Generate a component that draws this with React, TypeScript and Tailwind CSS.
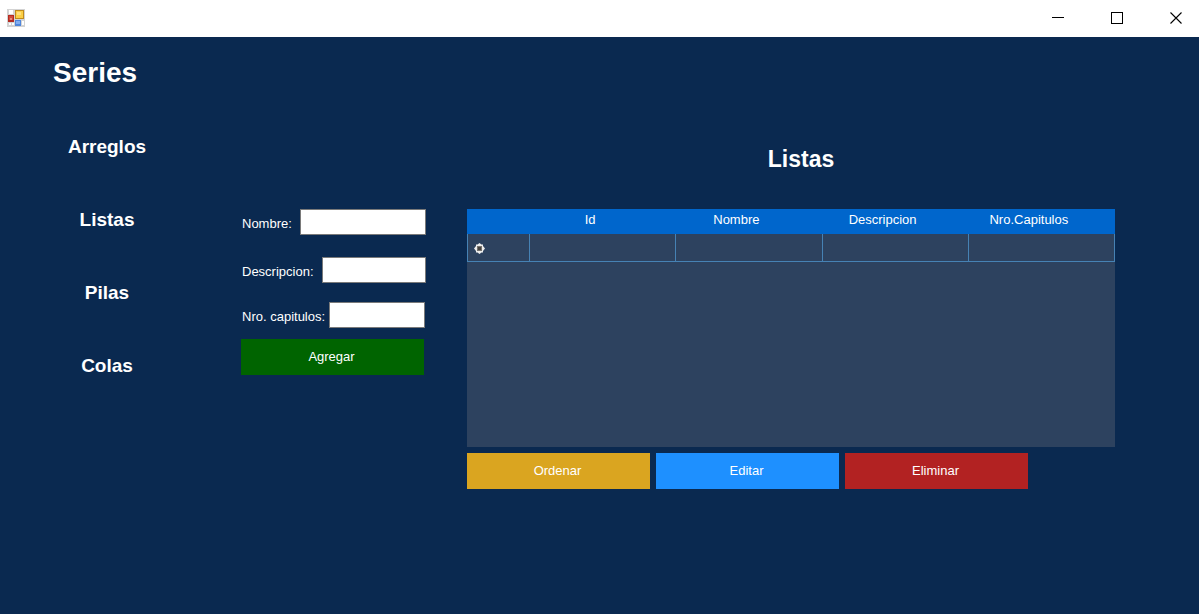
import React from "react";

const sections = ["Arreglos", "Listas", "Pilas", "Colas"];
const columns = ["Id", "Nombre", "Descripcion", "Nro.Capitulos"];

function FormIcon() {
  return (
    <svg width="18" height="18" viewBox="0 0 18 18" aria-hidden="true">
      <rect width="18" height="18" fill="#d3d3d3" />
      <rect x="2" y="1" width="4" height="4" fill="#fff" />
      <rect x="8" y="1" width="9" height="9" fill="#c08a1c" />
      <rect x="9" y="2" width="7" height="7" fill="#fbcf45" />
      <rect x="10" y="3" width="4" height="3" fill="#ffe07a" />
      <rect x="1" y="6" width="6" height="7" fill="#b52a20" />
      <rect x="2" y="7" width="4" height="4" fill="#cf4a3a" />
      <rect x="3" y="9" width="2" height="2" fill="#e98a7c" />
      <rect x="8" y="11" width="6" height="6" fill="#4f86dc" />
      <rect x="9" y="12" width="4" height="3" fill="#83aef0" />
      <rect x="15" y="12" width="2" height="4" fill="#fff" />
      <rect x="2" y="14" width="2" height="2" fill="#fff" />
      <rect x="5" y="14" width="2" height="2" fill="#fff" />
    </svg>
  );
}

function TitleBar() {
  const control = "flex h-full w-[59px] items-center justify-center";
  return (
    <header className="flex h-[37px] items-center justify-between bg-white pb-px pl-[7px] text-black">
      <FormIcon />
      <div className="-mr-[6px] flex h-full items-center">
        <button className={control} aria-label="Minimizar">
          <svg width="12" height="12" shapeRendering="crispEdges">
            <rect y="5" width="12" height="1" />
          </svg>
        </button>
        <button className={control} aria-label="Maximizar">
          <svg width="12" height="12" shapeRendering="crispEdges">
            <rect x="0.5" y="0.5" width="11" height="11" fill="none" stroke="#000" />
          </svg>
        </button>
        <button className={control} aria-label="Cerrar">
          <svg width="12" height="12">
            <path d="M0.5 0.5 11.5 11.5M11.5 0.5 0.5 11.5" stroke="#000" strokeWidth="1.1" />
          </svg>
        </button>
      </div>
    </header>
  );
}

function Field({ id, label, gap }: { id: string; label: string; gap: string }) {
  return (
    <div className={`flex items-center ${gap}`}>
      <label htmlFor={id} className="pt-1 pl-px whitespace-nowrap">
        {label}
      </label>
      <input
        id={id}
        className="h-[26px] min-w-0 flex-1 border border-[#7a7a7a] bg-white px-1 text-black outline-none"
      />
    </div>
  );
}

function ActionButton({ label, color }: { label: string; color: string }) {
  return <button className={`h-9 w-[183px] pr-[2px] text-center text-white ${color}`}>{label}</button>;
}

function NewRowIcon() {
  return (
    <svg width="11" height="11" viewBox="0 0 11 11" aria-hidden="true">
      <path d="M5.5 0 7.5 1.5H9V3l2 2.5L9 8v1.5H7.5L5.5 11l-2-1.5H2V8L0 5.5 2 3V1.5h1.5z" fill="#ededed" />
      <rect x="3" y="3" width="5" height="5" fill="#77736f" />
      <rect x="4" y="4" width="3" height="3" fill="#45423f" />
    </svg>
  );
}

export default function App() {
  return (
    <div className="flex min-h-screen flex-col bg-[#0a2950] font-['Liberation_Sans',Arial,sans-serif] text-[13px] leading-4 text-white">
      <TitleBar />
      <div className="flex flex-1">
        <aside className="w-[214px] shrink-0 pt-5">
          <h1 className="pl-[53px] text-[28px] leading-8 font-bold">Series</h1>
          <nav className="flex flex-col pt-[21px]">
            {sections.map((name) => (
              <button key={name} className="h-[73px] text-center text-[19px] font-bold">
                {name}
              </button>
            ))}
          </nav>
        </aside>

        <form className="ml-[27px] w-[185px] shrink-0 pt-[172px]" onSubmit={(e) => e.preventDefault()}>
          <Field id="nombre" label="Nombre:" gap="gap-2" />
          <div className="pt-[22px]">
            <Field id="descripcion" label="Descripcion:" gap="gap-2" />
          </div>
          <div className="pt-[19px] pr-px pb-[11px]">
            <Field id="capitulos" label="Nro. capitulos:" gap="gap-1" />
          </div>
          <ActionButton label="Agregar" color="bg-[#006400]" />
        </form>

        <main className="mr-[84px] ml-[41px] min-w-0 flex-1 pt-[108px]">
          <h2 className="pl-5 text-center text-[23px] leading-7 font-bold">Listas</h2>
          <div className="mt-9 h-[238px] bg-[#2d425f]">
            <table className="w-full table-fixed border-separate border-spacing-0">
              <thead>
                <tr className="h-[25px] bg-[#0066cc]">
                  <th className="w-[63px] p-0" />
                  {columns.map((name) => (
                    <th key={name} className="p-0 pt-[3px] pr-[26px] align-top font-normal">
                      {name}
                    </th>
                  ))}
                </tr>
              </thead>
              <tbody>
                <tr className="h-7">
                  <td className="border-r border-b border-l border-[#4682b4] p-0 pt-px pl-[6px]">
                    <NewRowIcon />
                  </td>
                  {columns.map((name) => (
                    <td key={name} className="border-r border-b border-[#4682b4] p-0" />
                  ))}
                </tr>
              </tbody>
            </table>
          </div>
          <div className="mt-[6px] flex gap-[6px]">
            <ActionButton label="Ordenar" color="bg-[#daa520]" />
            <ActionButton label="Editar" color="bg-[#1e90ff]" />
            <ActionButton label="Eliminar" color="bg-[#b22222]" />
          </div>
        </main>
      </div>
    </div>
  );
}
